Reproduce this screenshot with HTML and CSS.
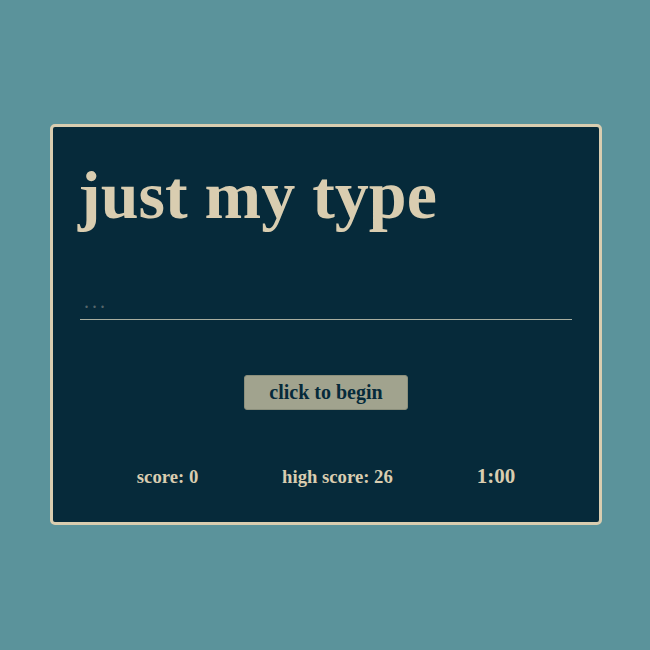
FILE: index.html
```html
<!DOCTYPE html>
<html lang="en">
<head>
<meta charset="utf-8">
<title>just my type</title>
<link rel="stylesheet" href="styles.css">
</head>
<body>
<main class="card">
  <h1 class="title">just my type</h1>
  <input class="entry" type="text" placeholder="...">
  <div class="actions">
    <button class="start" type="button">click to begin</button>
  </div>
  <div class="stats">
    <span class="stat">score: 0</span>
    <span class="stat">high score: 26</span>
    <span class="stat timer">1:00</span>
  </div>
</main>
</body>
</html>
```

FILE: styles.css
```css
html, body {
  margin: 0;
  padding: 0;
}
body {
  background: #5b939b;
  font-family: "Liberation Serif", "Times New Roman", serif;
  height: 650px;
  padding-top: 124px;
  box-sizing: border-box;
}
.card {
  box-sizing: border-box;
  width: 552px;
  height: 401px;
  margin-left: 50px;
  background: #062a3a;
  border: 3px solid #d9cdb0;
  border-radius: 5px;
  padding: 34px 27px 0 27px;
  display: flex;
  flex-direction: column;
}
.title {
  margin: 0 0 0 -2px;
  font-size: 68px;
  line-height: 68px;
  font-weight: bold;
  color: #d9cdb0;
}
.entry {
  margin-top: 59px;
  height: 32px;
  box-sizing: border-box;
  background: transparent;
  border: none;
  border-bottom: 1px solid #a8ae9f;
  padding: 0 4px 4px 4px;
  font-family: "Liberation Serif", serif;
  font-size: 20px;
  letter-spacing: 3px;
  color: #d9cdb0;
  outline: none;
  width: 100%;
}
.entry::placeholder {
  color: #56676b;
}
.actions {
  display: flex;
  justify-content: center;
  margin-top: 55px;
}
.start {
  height: 35px;
  width: 164px;
  background: #a1a38e;
  border: 1px solid #8b8f7c;
  border-radius: 3px;
  font-family: "Liberation Serif", serif;
  font-weight: bold;
  font-size: 20px;
  color: #062a3a;
  padding: 0;
}
.stats {
  margin: 54px -27px 0 -27px;
  display: flex;
  justify-content: space-evenly;
  align-items: baseline;
  line-height: 24px;
}
.stat {
  color: #d9cdb0;
  font-weight: bold;
  font-size: 18.7px;
}
.timer {
  font-size: 21px;
}
```
